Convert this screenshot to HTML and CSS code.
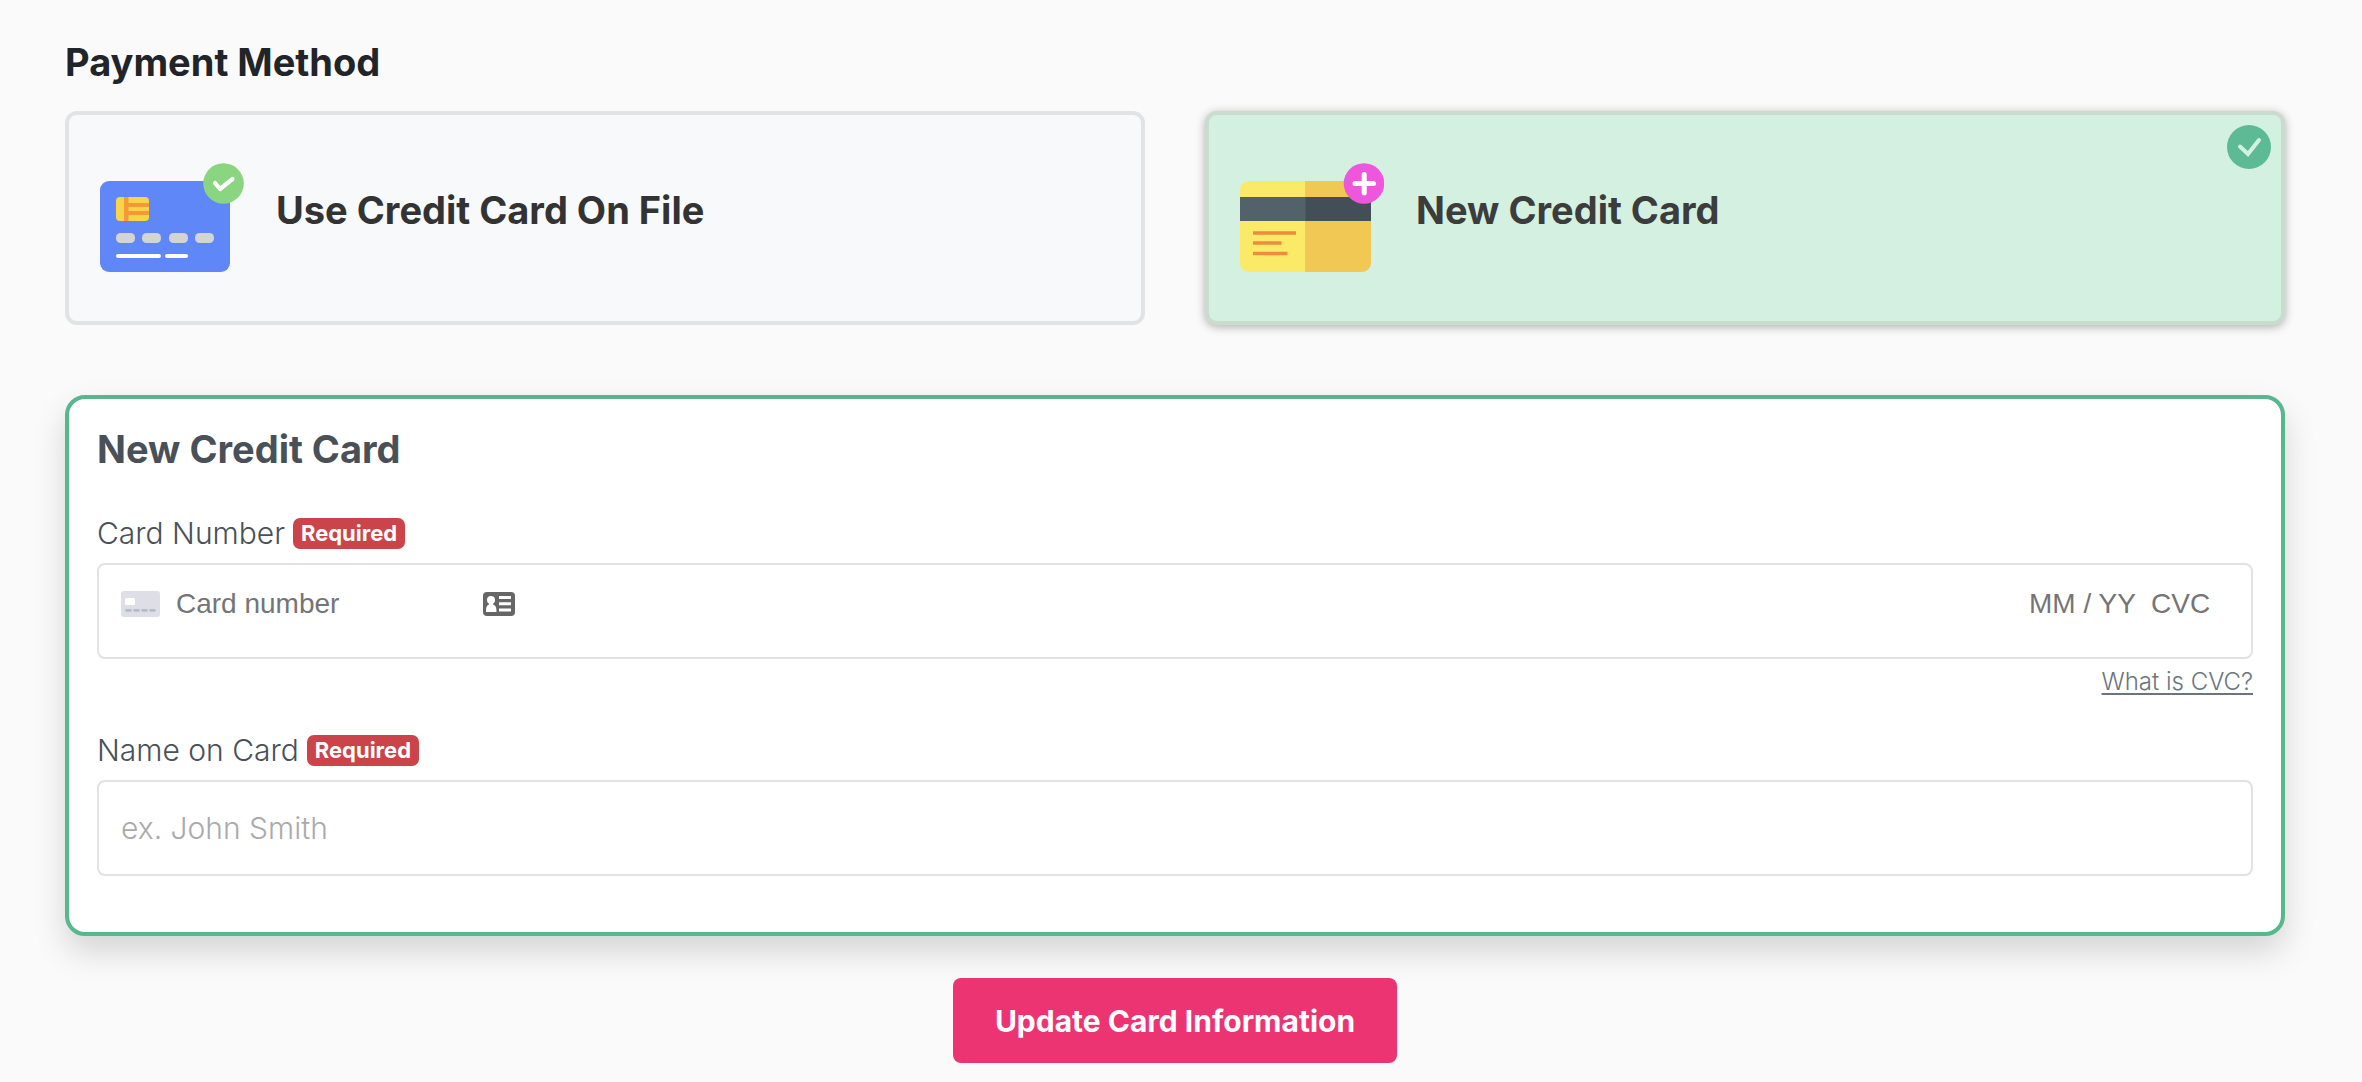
FILE: index.html
```html
<!DOCTYPE html>
<html lang="en">
<head>
  <meta charset="UTF-8" />
  <meta name="viewport" content="width=device-width, initial-scale=1" />
  <title>Payment Method</title>
  <link rel="stylesheet" href="styles.css">
</head>
<body>
  <form class="payment">
    <h2 class="heading" id="methodHeading">Payment Method</h2>

    <!-- Method picker -->
    <div class="methods" role="radiogroup" aria-labelledby="methodHeading">
      <label class="method">
        <input class="method-radio" type="radio" name="method" value="file" />
        <svg class="method-icon" viewBox="0 0 144 110" aria-hidden="true">
          <rect x="0" y="18" width="130" height="91" rx="9" fill="#5f87f8" />
          <rect x="16" y="34" width="33" height="24" rx="4" fill="#f8d548" />
          <path d="M24 34h4.500v6H49v4H28.500v4H49v4H28.500v6H24z" fill="#f29a38" />
          <g fill="#d4d4d4">
            <rect x="16" y="70" width="19" height="10" rx="4.500" />
            <rect x="42" y="70" width="19" height="10" rx="4.500" />
            <rect x="69" y="70" width="19" height="10" rx="4.500" />
            <rect x="95" y="70" width="19" height="10" rx="4.500" />
          </g>
          <path d="M18 93h41M67 93h19" stroke="#fff" stroke-width="4" stroke-linecap="round" />
          <circle cx="123.500" cy="20.500" r="20.300" fill="#89d580" />
          <path d="M115 20l5 6L132.500 16" fill="none" stroke="#fff" stroke-width="4.200" stroke-linecap="round" stroke-linejoin="round" />
        </svg>
        <span class="method-title">Use Credit Card On File</span>
      </label>

      <label class="method selected">
        <input class="method-radio" type="radio" name="method" value="new" checked />
        <svg class="method-icon" viewBox="0 0 144 110" aria-hidden="true">
          <path d="M9 18H66V109H9a9 9 0 0 1-9-9V27a9 9 0 0 1 9-9z" fill="#fbea68" />
          <path d="M65 18h57a9 9 0 0 1 9 9v73a9 9 0 0 1-9 9H65z" fill="#f0c853" />
          <rect x="0" y="34" width="66" height="24" fill="#52616a" />
          <rect x="65.500" y="34" width="65.500" height="24" fill="#444e58" />
          <path d="M13 70h43M13 80h28.500M13 90.500h34.500" stroke="#f08a40" stroke-width="3.600" />
          <circle cx="124" cy="20.500" r="20.300" fill="#ee57dd" />
          <path d="M115 20.500h18.500M124.200 11.500v18.500" stroke="#fff" stroke-width="5" stroke-linecap="round" />
        </svg>
        <span class="method-title">New Credit Card</span>
        <svg class="method-check" viewBox="0 0 44 44" aria-hidden="true">
          <circle cx="22" cy="22" r="22" fill="#5cbb94" />
          <path d="M13 21.500l8 7.500L32 15" fill="none" stroke="#d4f0e0" stroke-width="4" stroke-linecap="round" stroke-linejoin="miter" />
        </svg>
      </label>
    </div>

    <!-- New card form -->
    <section class="panel">
      <h3 class="heading panel-heading">New Credit Card</h3>

      <div class="label-row">
        <label for="cardNumber">Card Number</label>
        <span class="badge">Required</span>
      </div>
      <div class="field card-field">
        <svg class="card-brand" viewBox="0 0 39 26" aria-hidden="true">
          <rect width="39" height="26" rx="3" fill="#dedfe6" />
          <rect x="4" y="7" width="10" height="7" rx="1.500" fill="#fff" />
          <path d="M5.500 19.300h4M13.500 19.300h4M21.500 19.300h4M29.500 19.300h4" stroke="#babbc4" stroke-width="2.800" stroke-linecap="round" />
        </svg>
        <input class="card-input card-number" type="text" id="cardNumber" placeholder="Card number" />
        <svg class="contact-icon" viewBox="0 0 32 24" aria-hidden="true">
          <rect width="32" height="24" rx="4" fill="#666" />
          <circle cx="8" cy="8" r="4" fill="#fff" />
          <path d="M6 10h4v2.500c3 1 3.500 3 3.500 7.500H3c0-4.500.5-6.500 3-7.500z" fill="#fff" />
          <path d="M16 5.500h12M16 11.700h12M16 18h12" stroke="#fff" stroke-width="3" />
        </svg>
        <input class="card-input card-expiry" type="text" aria-label="Expiry date" placeholder="MM / YY" />
        <input class="card-input card-cvc" type="text" aria-label="CVC" placeholder="CVC" />
      </div>
      <div class="hint">
        <a href="#">What is CVC?</a>
      </div>

      <div class="label-row">
        <label for="cardName">Name on Card</label>
        <span class="badge">Required</span>
      </div>
      <input class="field name-field" type="text" id="cardName" placeholder="ex. John Smith" />
    </section>

    <div class="actions">
      <button class="submit" type="button">Update Card Information</button>
    </div>
  </form>
</body>
</html>
```

FILE: styles.css
```css
* {
  box-sizing: border-box;
}
body {
  margin: 0;
  background: #fafafa;
  font-family: Inter, "Open Sans", sans-serif;
  font-size: 30px;
  color: #495057;
}
.payment {
  padding: 40px 77px 16px 65px;
}
.heading {
  margin: 0;
  font-size: 38px;
  line-height: 44px;
  font-weight: 700;
  color: #212529;
}

/* method picker */
.methods {
  display: grid;
  grid-template-columns: 1fr 1fr;
  gap: 60px;
  margin-top: 27px;
}
.method {
  position: relative;
  display: flex;
  align-items: center;
  gap: 32px;
  height: 214px;
  padding: 0 31px;
  border: 4px solid #e1e3e4;
  border-radius: 12px;
  background: #f8f9fb;
  color: #333;
  cursor: pointer;
}
.method.selected {
  border-color: #cadbcf;
  background: #d4f0e0;
  box-shadow: 0 2px 10px rgba(0, 0, 0, 0.3);
  color: #3c3c3c;
}
.method-radio {
  position: absolute;
  opacity: 0;
}
.method-icon {
  width: 144px;
  height: 110px;
}
.method-title {
  margin-bottom: 16px;
  font-size: 38px;
  line-height: 44px;
  font-weight: 700;
}
.method-check {
  position: absolute;
  top: 10px;
  right: 10px;
  width: 44px;
  height: 44px;
}

/* card form */
.panel {
  margin-top: 70px;
  padding: 28px 28px 56px;
  border: 4px solid #57b88d;
  border-radius: 20px;
  background: #fff;
  box-shadow: 0 16px 32px rgba(0, 0, 0, 0.15);
}
.panel-heading {
  margin-bottom: 44px;
  color: #495057;
}
.label-row {
  display: flex;
  align-items: center;
  gap: 8px;
  margin-bottom: 12px;
  line-height: 36px;
  font-weight: 300;
}
.badge {
  padding: 0 8px;
  border-radius: 7px;
  background: #cb444a;
  color: #fff;
  font-size: 22px;
  line-height: 31px;
  font-weight: 700;
}
.field {
  width: 100%;
  height: 96px;
  padding: 0 22px;
  border: 2px solid #e2e2e2;
  border-radius: 8px;
  background: #fff;
}
.card-field {
  display: flex;
  align-items: center;
  padding: 0 22px 14px;
}
.card-brand {
  width: 39px;
  height: 26px;
  margin-right: 16px;
}
.card-input {
  padding: 0;
  border: 0;
  outline: 0;
  background: none;
  font-family: "Liberation Sans", Arial, sans-serif;
  font-size: 28px;
  color: #333;
}
.card-input::placeholder {
  color: #757575;
}
.card-number {
  width: 307px;
}
.contact-icon {
  width: 32px;
  height: 24px;
}
.card-expiry {
  width: 122px;
  margin-left: auto;
}
.card-cvc {
  width: 78px;
}
.hint {
  margin: 4px 0 34px;
  line-height: 32px;
  text-align: right;
}
.hint a {
  color: #6c757d;
  font-size: 24px;
  font-weight: 300;
  text-underline-offset: 3px;
  text-decoration-thickness: 2px;
}
.name-field {
  display: block;
  font: inherit;
  font-weight: 300;
}
.name-field::placeholder {
  color: #aaa;
}

.actions {
  margin-top: 42px;
  text-align: center;
}
.submit {
  height: 85px;
  padding: 0 42px;
  border: 0;
  border-radius: 8px;
  background: #ec3473;
  color: #fff;
  font: inherit;
  font-weight: 700;
  cursor: pointer;
}
```
